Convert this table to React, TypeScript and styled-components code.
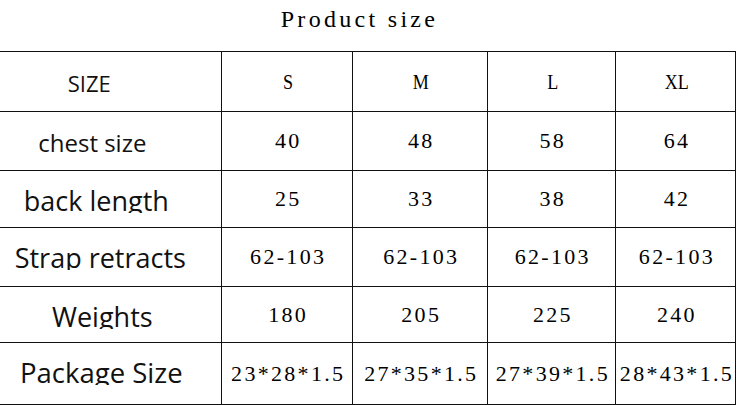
import React from 'react';
import styled, { createGlobalStyle } from 'styled-components';

const GlobalStyle = createGlobalStyle`
    html,
    body {
        margin: 0;
        padding: 0;
        background: #ffffff;
        overflow: hidden;
    }
`;

interface Row {
    label: string;
    labelSize: number;
    labelShift: number;
    clipped: boolean;
    height: number;
    values: string[];
}

const sizes = ['S', 'M', 'L', 'XL'];

// labelShift pulls the label left of the cell centre, as in the picture;
// clipped rows lose their descenders, as the source image does
const rows: Row[] = [
    {
        label: 'chest size',
        labelSize: 24,
        labelShift: 36,
        clipped: false,
        height: 59,
        values: ['40', '48', '58', '64'],
    },
    {
        label: 'back length',
        labelSize: 27,
        labelShift: 28,
        clipped: true,
        height: 57,
        values: ['25', '33', '38', '42'],
    },
    {
        label: 'Strap retracts',
        labelSize: 27,
        labelShift: 20,
        clipped: true,
        height: 59,
        values: ['62-103', '62-103', '62-103', '62-103'],
    },
    {
        label: 'Weights',
        labelSize: 27,
        labelShift: 16,
        clipped: true,
        height: 56,
        values: ['180', '205', '225', '240'],
    },
    {
        label: 'Package Size',
        labelSize: 27.5,
        labelShift: 18,
        clipped: true,
        height: 62,
        values: ['23*28*1.5', '27*35*1.5', '27*39*1.5', '28*43*1.5'],
    },
];

const columnWidths = [221, 131, 135, 128, 120];

function App(): React.ReactElement {
    return (
        <Page>
            <GlobalStyle />
            <Title>Product size</Title>

            <Table>
                <colgroup>
                    {columnWidths.map((width, index) => (
                        <col key={index} style={{ width }} />
                    ))}
                </colgroup>
                <tbody>
                    <TableRow $height={60}>
                        <LabelCell $size={22} $shift={42}>
                            <LabelText $clipped={false}>SIZE</LabelText>
                        </LabelCell>
                        {sizes.map(size => (
                            <ValueCell key={size}>
                                <HeaderText>{size}</HeaderText>
                            </ValueCell>
                        ))}
                    </TableRow>

                    {rows.map(row => (
                        <TableRow key={row.label} $height={row.height}>
                            <LabelCell $size={row.labelSize} $shift={row.labelShift}>
                                <LabelText $clipped={row.clipped}>{row.label}</LabelText>
                            </LabelCell>
                            {row.values.map((value, index) => (
                                <ValueCell key={index}>{value}</ValueCell>
                            ))}
                        </TableRow>
                    ))}
                </tbody>
            </Table>
        </Page>
    );
}

export default App;

const Page = styled.div`
    width: 736px;
    height: 405px;
    background: #ffffff;
    color: #111111;
    overflow: hidden;
`;

const Title = styled.h1`
    margin: 0;
    height: 51px;
    box-sizing: border-box;
    padding: 7px 17px 0 0;
    font-family: 'Liberation Serif', serif;
    font-weight: normal;
    font-size: 24px;
    line-height: 24px;
    letter-spacing: 3.3px;
    text-align: center;
    color: #000000;
`;

const Table = styled.table`
    width: 736px;
    table-layout: fixed;
    border-collapse: collapse;
    border-spacing: 0;
`;

const TableRow = styled.tr<{ $height: number }>`
    height: ${props => props.$height}px;
`;

const Cell = styled.td`
    padding: 0;
    border: 1px solid #111111;
    box-sizing: border-box;
`;

const LabelCell = styled(Cell)<{ $size: number; $shift: number }>`
    border-left: none;
    vertical-align: top;
    text-align: center;
    font-family: 'Open Sans', sans-serif;
    font-size: ${props => props.$size}px;
    padding-top: calc(40px - 0.888em);
    padding-right: ${props => props.$shift}px;
`;

const LabelText = styled.div<{ $clipped: boolean }>`
    height: ${props => (props.$clipped ? '0.95em' : '1.2em')};
    line-height: 1;
    overflow: hidden;
    white-space: nowrap;
`;

const ValueCell = styled(Cell)`
    vertical-align: middle;
    text-align: center;
    font-family: 'Liberation Serif', serif;
    font-size: 22px;
    letter-spacing: 2.3px;
    padding-left: 3px;
    white-space: nowrap;
    color: #000000;
`;

const HeaderText = styled.span`
    display: inline-block;
    letter-spacing: 0;
    font-size: 22px;
    transform: scaleX(0.82);
`;
